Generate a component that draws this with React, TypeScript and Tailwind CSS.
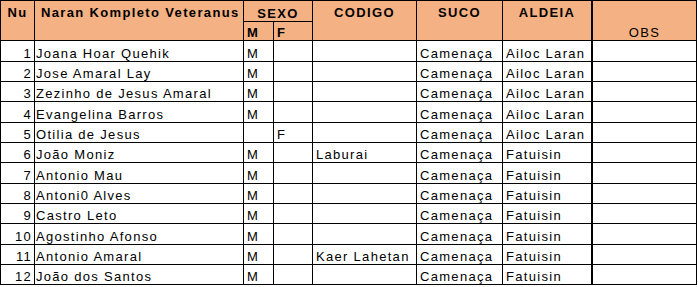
import React from "react";

interface Veteranu {
  nu: number;
  naran: string;
  m: boolean;
  f: boolean;
  codigo: string;
  suco: string;
  aldeia: string;
}

const rows: Veteranu[] = [
  { nu: 1, naran: "Joana Hoar Quehik", m: true, f: false, codigo: "", suco: "Camenaça", aldeia: "Ailoc Laran" },
  { nu: 2, naran: "Jose Amaral Lay", m: true, f: false, codigo: "", suco: "Camenaça", aldeia: "Ailoc Laran" },
  { nu: 3, naran: "Zezinho de Jesus Amaral", m: true, f: false, codigo: "", suco: "Camenaça", aldeia: "Ailoc Laran" },
  { nu: 4, naran: "Evangelina Barros", m: true, f: false, codigo: "", suco: "Camenaça", aldeia: "Ailoc Laran" },
  { nu: 5, naran: "Otilia de Jesus", m: false, f: true, codigo: "", suco: "Camenaça", aldeia: "Ailoc Laran" },
  { nu: 6, naran: "João Moniz", m: true, f: false, codigo: "Laburai", suco: "Camenaça", aldeia: "Fatuisin" },
  { nu: 7, naran: "Antonio Mau", m: true, f: false, codigo: "", suco: "Camenaça", aldeia: "Fatuisin" },
  { nu: 8, naran: "Antoni0 Alves", m: true, f: false, codigo: "", suco: "Camenaça", aldeia: "Fatuisin" },
  { nu: 9, naran: "Castro Leto", m: true, f: false, codigo: "", suco: "Camenaça", aldeia: "Fatuisin" },
  { nu: 10, naran: "Agostinho Afonso", m: true, f: false, codigo: "", suco: "Camenaça", aldeia: "Fatuisin" },
  { nu: 11, naran: "Antonio Amaral", m: true, f: false, codigo: "Kaer Lahetan", suco: "Camenaça", aldeia: "Fatuisin" },
  { nu: 12, naran: "João dos Santos", m: true, f: false, codigo: "", suco: "Camenaça", aldeia: "Fatuisin" },
];

const head = "bg-[#f4b183] font-bold tracking-[1.35px]";
const cell = "bg-white flex items-end leading-[15px] whitespace-nowrap overflow-hidden tracking-[1.3px]";

export default function App() {
  return (
    <div className="bg-white w-[698px] h-[287px] font-['Liberation_Sans',sans-serif] text-[13px] text-black">
      <div className="grid w-fit bg-black gap-px p-px grid-cols-[33px_208px_29px_38px_103px_85px_88px_104px] grid-rows-[20px_18px_20px_19px_19px_20px_19px_19px_20px_19px_19px_20px_19px_19px]">
        {/* header */}
        <div className={`${head} row-span-2 text-center pt-[4px] leading-[15px]`}>Nu</div>
        <div className={`${head} row-span-2 pl-[6px] pt-[4px] leading-[15px]`}>Naran Kompleto Veteranus</div>
        <div className={`${head} col-span-2 flex items-end justify-center leading-[15px]`}>SEXO</div>
        <div className={`${head} row-span-2 text-center pt-[4px] leading-[15px]`}>CODIGO</div>
        <div className={`${head} row-span-2 text-center pt-[4px] leading-[15px]`}>SUCO</div>
        <div className={`${head} row-span-2 text-center pt-[4px] leading-[15px]`}>ALDEIA</div>
        <div className="bg-[#f4b183] row-span-2 border-l border-black flex items-end justify-center leading-[15px] tracking-[1.3px]">
          OBS
        </div>
        <div className={`${head} flex items-end pl-[3px] leading-[15px]`}>M</div>
        <div className={`${head} flex items-end pl-[3px] leading-[15px]`}>F</div>

        {/* data */}
        {rows.map((r) => (
          <React.Fragment key={r.nu}>
            <div className={`${cell} justify-end pr-[2px]`}>{r.nu}</div>
            <div className={`${cell} pl-[1px]`}>{r.naran}</div>
            <div className={`${cell} pl-[3px]`}>{r.m ? "M" : ""}</div>
            <div className={`${cell} pl-[3px]`}>{r.f ? "F" : ""}</div>
            <div className={`${cell} pl-[3px]`}>{r.codigo}</div>
            <div className={`${cell} pl-[3px]`}>{r.suco}</div>
            <div className={`${cell} pl-[3px]`}>{r.aldeia}</div>
            <div className={`${cell} border-l border-black`} />
          </React.Fragment>
        ))}
      </div>
    </div>
  );
}
